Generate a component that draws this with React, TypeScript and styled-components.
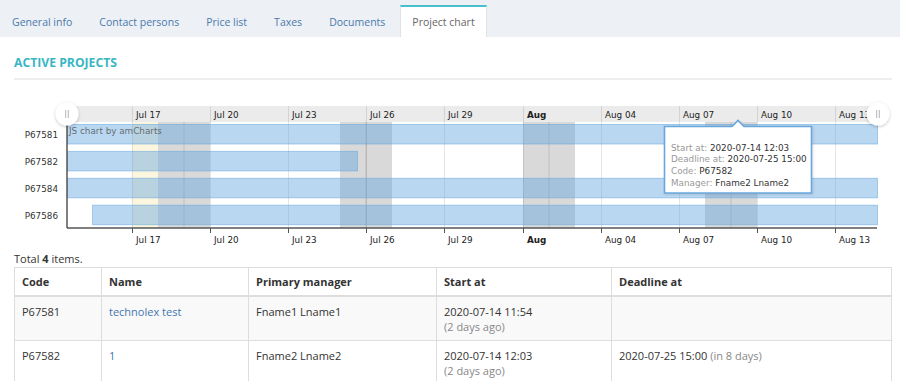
import React from "react";
import styled, { createGlobalStyle } from "styled-components";

const GlobalStyle = createGlobalStyle`
  body {
    margin: 0;
    background: #ffffff;
    font-family: "Open Sans", "Liberation Sans", sans-serif;
    color: #333333;
  }
`;

const TabBar = styled.div`
  display: flex;
  align-items: flex-end;
  height: 37px;
  padding-top: 5px;
  box-sizing: border-box;
  background: #edf0f4;
`;

const Tab = styled.div<{ $active?: boolean }>`
  display: flex;
  align-items: center;
  height: 32px;
  box-sizing: border-box;
  padding: 0 11px;
  margin-right: 3px;
  font-size: 10.5px;
  color: ${(p) => (p.$active ? "#666666" : "#4a7aae")};
  background: ${(p) => (p.$active ? "#ffffff" : "transparent")};
  border-top: 2px solid ${(p) => (p.$active ? "#45c0cc" : "transparent")};
  border-left: 1px solid ${(p) => (p.$active ? "#dfe3e8" : "transparent")};
  border-right: 1px solid ${(p) => (p.$active ? "#dfe3e8" : "transparent")};
`;

const Content = styled.div`
  padding: 0 8px 0 14px;
`;

const Heading = styled.h2`
  margin: 0;
  padding: 17px 0 6px;
  font-size: 12.2px;
  line-height: 18px;
  font-weight: 700;
  color: #38b6c3;
  border-bottom: 2px solid #eeeeee;
`;

const ChartSvg = styled.svg`
  display: block;
  margin-left: -14px;
  font-family: "DejaVu Sans", Verdana, sans-serif;
  font-size: 8.8px;
`;

const Summary = styled.div`
  margin-top: 1px;
  font-size: 11px;
  line-height: 15px;
  color: #333333;
`;

const Table = styled.table`
  margin-top: 1px;
  width: 100%;
  border-collapse: collapse;
  table-layout: fixed;
  font-size: 11px;
  line-height: 15px;
  border: 1px solid #dddddd;
`;

const Col = styled.col<{ $w?: number }>`
  width: ${(p) => (p.$w ? `${p.$w}px` : "auto")};
`;

const HeadCell = styled.th`
  padding: 6px 7px 6px;
  text-align: left;
  font-weight: 700;
  color: #333333;
  border: 1px solid #dddddd;
  border-bottom-width: 2px;
`;

const Row = styled.tr<{ $striped?: boolean }>`
  background: ${(p) => (p.$striped ? "#f9f9f9" : "#ffffff")};
`;

const Cell = styled.td`
  padding: 7px 7px 6px;
  vertical-align: top;
  border: 1px solid #dddddd;
  height: 30px;
`;

const Link = styled.a`
  color: #3f77b2;
  text-decoration: none;
`;

const Muted = styled.span`
  color: #888888;
`;

const tabs = ["General info", "Contact persons", "Price list", "Taxes", "Documents", "Project chart"];

const ticks = [
  { x: 132, label: "Jul 17" },
  { x: 210, label: "Jul 20" },
  { x: 288, label: "Jul 23" },
  { x: 366, label: "Jul 26" },
  { x: 444, label: "Jul 29" },
  { x: 523, label: "Aug", bold: true },
  { x: 601, label: "Aug 04" },
  { x: 679, label: "Aug 07" },
  { x: 757, label: "Aug 10" },
  { x: 835, label: "Aug 13" },
];

const weekends = [158, 340, 523, 705];

const bars = [
  { code: "P67581", from: 67, to: 877 },
  { code: "P67582", from: 67, to: 357 },
  { code: "P67584", from: 67, to: 877 },
  { code: "P67586", from: 92, to: 877 },
];

const PLOT_TOP = 122;
const PLOT_BOTTOM = 228;

const Grip = ({ cx }: { cx: number }) => (
  <g>
    <circle cx={cx} cy={114} r={11.5} fill="#ffffff" filter="url(#gripShadow)" />
    <line x1={cx - 1.3} y1={110} x2={cx - 1.3} y2={118} stroke="#b5b5b5" strokeWidth={1} />
    <line x1={cx + 1.3} y1={110} x2={cx + 1.3} y2={118} stroke="#b5b5b5" strokeWidth={1} />
  </g>
);

const ProjectChart = () => {
  const tip = [
    ["Start at: ", "2020-07-14 12:03"],
    ["Deadline at: ", "2020-07-25 15:00"],
    ["Code: ", "P67582"],
    ["Manager: ", "Fname2 Lname2"],
  ];

  return (
    <ChartSvg width={900} height={170} viewBox="0 80 900 170">
      <defs>
        <filter id="gripShadow" x="-50%" y="-50%" width="200%" height="200%">
          <feDropShadow dx="0" dy="1" stdDeviation="1.5" floodColor="#000" floodOpacity="0.25" />
        </filter>
        <filter id="tipShadow" x="-10%" y="-10%" width="130%" height="130%">
          <feDropShadow dx="1" dy="1" stdDeviation="1" floodColor="#000" floodOpacity="0.12" />
        </filter>
      </defs>

      {/* scrollbar strip */}
      <rect x={67} y={106} width={810} height={16} fill="#ebebeb" />

      {/* today + weekend guides */}
      <rect x={132} y={PLOT_TOP} width={26} height={PLOT_BOTTOM - PLOT_TOP} fill="#fcf6de" />
      {weekends.map((x) => (
        <g key={x}>
          <rect x={x} y={PLOT_TOP} width={52} height={PLOT_BOTTOM - PLOT_TOP} fill="#000" fillOpacity={0.15} />
          <line x1={x + 26} y1={PLOT_TOP} x2={x + 26} y2={PLOT_BOTTOM} stroke="#000" strokeOpacity={0.12} />
        </g>
      ))}

      {/* grid */}
      {ticks.map((t) => (
        <line key={t.x} x1={t.x + 0.5} y1={106} x2={t.x + 0.5} y2={PLOT_BOTTOM} stroke="#000" strokeOpacity={0.1} />
      ))}

      {/* bars */}
      {bars.map((b, i) => {
        const y = 124.5 + i * 26.9;
        return (
          <g key={b.code}>
            <rect
              x={b.from + 0.5}
              y={y}
              width={b.to - b.from}
              height={19.5}
              fill="#67a7e0"
              fillOpacity={0.45}
              stroke="#67a7e0"
              strokeOpacity={0.55}
            />
            <text x={58} y={y + 13.5} textAnchor="end" fill="#333">
              {b.code}
            </text>
          </g>
        );
      })}

      <text x={69} y={134} fill="#555" fillOpacity={0.85}>
        JS chart by amCharts
      </text>

      {/* axes */}
      <line x1={67} y1={PLOT_TOP} x2={67} y2={PLOT_BOTTOM} stroke="#555" strokeWidth={1.5} />
      <line x1={67} y1={PLOT_BOTTOM} x2={877} y2={PLOT_BOTTOM} stroke="#555" strokeWidth={1.5} />
      {ticks.map((t) => (
        <g key={`l${t.x}`}>
          <line x1={t.x + 0.5} y1={PLOT_BOTTOM} x2={t.x + 0.5} y2={PLOT_BOTTOM + 5} stroke="#555" />
          <text x={t.x + 4} y={117.5} fill="#222" fontWeight={t.bold ? 700 : 400}>
            {t.label}
          </text>
          <text x={t.x + 4} y={242.5} fill="#222" fontWeight={t.bold ? 700 : 400}>
            {t.label}
          </text>
        </g>
      ))}

      <Grip cx={67} />
      <Grip cx={878} />

      {/* balloon */}
      <path
        d="M664.5,126.5 H732 L738,120.5 L744,126.5 H811.5 V193 H664.5 Z"
        fill="#ffffff"
        stroke="#6aa6dc"
        strokeWidth={1.6}
        filter="url(#tipShadow)"
      />
      {tip.map(([label, value], i) => (
        <text key={label} x={671} y={150.5 + i * 11.8}>
          <tspan fill="#999">{label}</tspan>
          <tspan fill="#333">{value}</tspan>
        </text>
      ))}
    </ChartSvg>
  );
};

const App: React.FC = () => (
  <>
    <GlobalStyle />
    <TabBar>
      {tabs.map((t) => (
        <Tab key={t} $active={t === "Project chart"}>
          {t}
        </Tab>
      ))}
    </TabBar>
    <Content>
      <Heading>ACTIVE PROJECTS</Heading>
      <ProjectChart />
      <Summary>
        Total <b>4</b> items.
      </Summary>
      <Table>
        <colgroup>
          <Col $w={87} />
          <Col $w={147} />
          <Col $w={188} />
          <Col $w={175} />
          <Col />
        </colgroup>
        <thead>
          <tr>
            <HeadCell>Code</HeadCell>
            <HeadCell>Name</HeadCell>
            <HeadCell>Primary manager</HeadCell>
            <HeadCell>Start at</HeadCell>
            <HeadCell>Deadline at</HeadCell>
          </tr>
        </thead>
        <tbody>
          <Row $striped>
            <Cell>P67581</Cell>
            <Cell>
              <Link href="#">technolex test</Link>
            </Cell>
            <Cell>Fname1 Lname1</Cell>
            <Cell>
              2020-07-14 11:54
              <br />
              <Muted>(2 days ago)</Muted>
            </Cell>
            <Cell />
          </Row>
          <Row>
            <Cell>P67582</Cell>
            <Cell>
              <Link href="#">1</Link>
            </Cell>
            <Cell>Fname2 Lname2</Cell>
            <Cell>
              2020-07-14 12:03
              <br />
              <Muted>(2 days ago)</Muted>
            </Cell>
            <Cell>
              2020-07-25 15:00 <Muted>(in 8 days)</Muted>
            </Cell>
          </Row>
        </tbody>
      </Table>
    </Content>
  </>
);

export default App;
